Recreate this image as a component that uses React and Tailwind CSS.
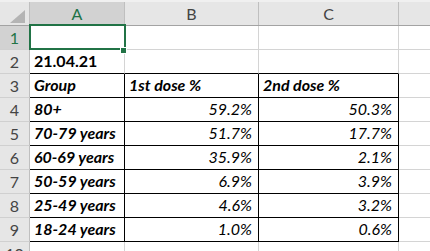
import React from "react";

const font = { fontFamily: "Lato, 'Liberation Sans', sans-serif" };

const rows = [
  { n: "1", a: "", b: "", c: "", kind: "sel" },
  { n: "2", a: "21.04.21", b: "", c: "", kind: "date" },
  { n: "3", a: "Group", b: "1st dose %", c: "2nd dose %", kind: "head" },
  { n: "4", a: "80+", b: "59.2%", c: "50.3%", kind: "data" },
  { n: "5", a: "70-79 years", b: "51.7%", c: "17.7%", kind: "data" },
  { n: "6", a: "60-69 years", b: "35.9%", c: "2.1%", kind: "data" },
  { n: "7", a: "50-59 years", b: "6.9%", c: "3.9%", kind: "data" },
  { n: "8", a: "25-49 years", b: "4.6%", c: "3.2%", kind: "data" },
  { n: "9", a: "18-24 years", b: "1.0%", c: "0.6%", kind: "data" },
  { n: "10", a: "", b: "", c: "", kind: "empty" },
];

function Row({ r }) {
  const table = r.kind === "head" || r.kind === "data";
  const topEdge = r.kind === "date";
  const bB = table || topEdge ? "border-b-black" : "border-b-[#d4d4d4]";
  const bR = table ? "border-r-black" : "border-r-[#d4d4d4]";
  const bRb = table ? "border-r-black" : "border-r-[#d4d4d4]";
  const cellBase = "h-[24px] border-b border-r flex items-end pb-[3px] text-[16px] leading-[19px] text-black whitespace-nowrap overflow-hidden";
  const aCls =
    r.kind === "date"
      ? "font-bold"
      : r.kind === "head" || r.kind === "data"
      ? "font-bold italic"
      : "";
  const valCls = r.kind === "head" ? "font-bold italic justify-start pl-[4px]" : "italic justify-end pr-[6px]";
  return (
    <div className="flex">
      <div
        className={`w-[30px] h-[24px] shrink-0 border-r border-b border-r-[#bfbfbf] border-b-[#d0d0d0] flex items-center justify-center text-[16px] leading-[19px] ${
          r.kind === "sel" ? "bg-[#d2d2d2] text-[#217346]" : "bg-[#e6e6e6] text-[#444444]"
        }`}
      >
        {r.n}
      </div>
      <div className={`w-[95px] shrink-0 pl-[4px] ${cellBase} ${bB} ${bR} ${aCls}`}>{r.a}</div>
      <div className={`w-[134px] shrink-0 ${cellBase} ${bB} ${bR} ${valCls}`}>{r.b}</div>
      <div className={`w-[140px] shrink-0 ${cellBase} ${bB} ${bRb} ${valCls}`}>{r.c}</div>
      <div className="flex-1 h-[24px] border-b border-b-[#d4d4d4]" />
    </div>
  );
}

export default function App() {
  return (
    <div className="relative w-[430px] h-[251px] overflow-hidden bg-white" style={font}>
      {/* column headers */}
      <div className="flex h-[26px] bg-[#e6e6e6] border-t-2 border-t-[#f0f0f0] border-b border-b-[#a3a3a3]">
        <div className="w-[30px] shrink-0 border-r border-r-[#bfbfbf] relative">
          <svg className="absolute left-[10px] top-[8px]" width="15" height="13" viewBox="0 0 15 13">
            <polygon points="15,0 15,13 0,13" fill="#b4b4b4" />
          </svg>
        </div>
        <div className="w-[95px] shrink-0 bg-[#d2d2d2] border-r border-r-[#bfbfbf] flex items-center justify-center text-[16px] text-[#217346]">
          A
        </div>
        <div className="w-[134px] shrink-0 border-r border-r-[#bfbfbf] flex items-center justify-center text-[16px] text-[#444444]">
          B
        </div>
        <div className="w-[140px] shrink-0 border-r border-r-[#bfbfbf] flex items-center justify-center text-[16px] text-[#444444]">
          C
        </div>
        <div className="flex-1" />
      </div>
      {rows.map((r) => (
        <Row key={r.n} r={r} />
      ))}
      {/* selection box on A1 */}
      <div className="absolute left-[29px] top-[24px] w-[97px] h-[26px] border-2 border-[#217346]" />
      <div className="absolute left-[120px] top-[47px] w-[7px] h-[7px] bg-[#217346] border border-white" />
    </div>
  );
}
